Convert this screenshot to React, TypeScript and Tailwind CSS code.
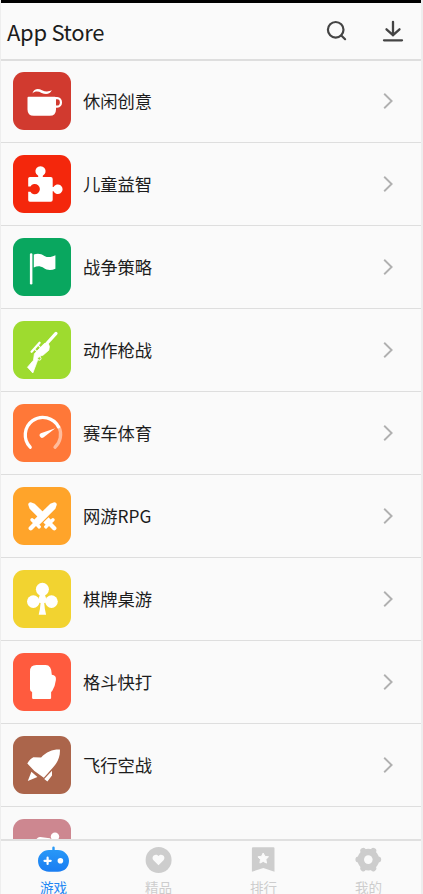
import React, { useState } from "react";

type Category = {
  name?: string;
  color: string;
  icon: React.ReactNode;
};

// upright sword centred on 0,0, rotated into place below
const sword =
  "M-3.600 8V-14.600L-1.800-18.400q1.800-1.800 3.600 0L3.600-14.600V8h1.600q1.500 0 1.500 1.700t-1.500 1.700H2.200v5.200q0 2.200-2.200 2.200t-2.200-2.200v-5.200h-3q-1.500 0-1.500-1.700t1.500-1.700z";

const categories: Category[] = [
  {
    name: "休闲创意",
    color: "bg-[#d13a2f]",
    icon: (
      <>
        <path d="M14.5 25.8q0-1 1-1h26.3q1.2 0 1.2 1v11.7q0 6.3-6.3 6.3H20.8q-6.3 0-6.3-6.3z" />
        <path d="M42 26.2h2.200c5 0 5 8.400 0 8.400H42" fill="none" stroke="#fff" strokeWidth="2.200" />
        <path d="M19.400 21.400c1.800-5.200 6-5 9.600-3.200 3.800 1.800 6.800 1.600 9.800-.2-1.400 4.200-6 5-10.200 2.900-3.200-1.600-6.400-2-9.200.5z" />
      </>
    ),
  },
  {
    name: "儿童益智",
    color: "bg-[#f4270c]",
    icon: (
      <path d="M16.800 22h8.400v-1.200a5.100 5.100 0 1 1 4.600 0V22h8q1.900 0 1.900 1.900v8.200h.8a4.800 4.800 0 1 1 0 4.200h-.8v8.500q0 1.900-1.900 1.900h-21q-1.600 0-1.600-1.600v-8.400h2.200a5.100 5.100 0 1 0 0-5.200h-2.200v-7.900q0-1.600 1.600-1.600z" />
    ),
  },
  {
    name: "战争策略",
    color: "bg-[#09a75f]",
    icon: (
      <>
        <rect x="16.9" y="15.2" width="2.500" height="31.200" rx="1.200" />
        <path d="M20.800 16.600c4-1.800 7.400-.8 10.600 1.300 3.600 1.900 7 1.400 11-.6v13.400c-4 1.800-8.400 1.800-12-1-3.400-2-6-2-9.600-.2z" />
      </>
    ),
  },
  {
    name: "动作枪战",
    color: "bg-[#9edb2f]",
    icon: (
      <>
        <path d="M32 24.500L43 12.400" stroke="#fff" strokeWidth="3.200" strokeLinecap="round" />
        <path
          d="M21.400 32.800l9.800-10.200 4 0 1.200 2.800-.6 3.800-5.800 5-2.200.6-3.200 4.500-1.300 3.500-3.500 9.200-5.300-5.800 6-7z"
          stroke="#fff"
          strokeWidth=".8"
          strokeLinejoin="round"
        />
        <path d="M18.600 30.700l8-8.900" stroke="#fff" strokeWidth="2.300" strokeLinecap="round" />
        <path d="M21.500 28.200l3 3M25 24.200l3 3" stroke="#fff" strokeWidth="1.200" />
        <circle cx="26.300" cy="37.500" r="1.700" fill="#9edb2f" stroke="#fff" strokeWidth="1" />
      </>
    ),
  },
  {
    name: "赛车体育",
    color: "bg-[#ff7838]",
    icon: (
      <>
        <path d="M17.200 43.200A17.600 17.600 0 1 1 45.500 22.900" fill="none" stroke="#fff" strokeWidth="3.300" strokeLinecap="round" />
        <path d="M46 22.900A17.600 17.600 0 0 1 42 43.200" fill="none" stroke="#fff" strokeOpacity=".5" strokeWidth="3.300" strokeLinecap="round" />
        <path d="M42.300 24.200L30.400 33.400a2.400 2.400 0 0 1-2.600-4.200z" />
      </>
    ),
  },
  {
    name: "网游RPG",
    color: "bg-[#ffa42a]",
    icon: (
      <>
        <path d={sword} transform="translate(29.500 29.500) rotate(-45)" />
        <g transform="translate(29.500 29.500) rotate(45)">
          <rect x="3.200" y="-4.800" width="1.700" height="9.600" fill="#ffa42a" />
          <path d={sword} />
        </g>
      </>
    ),
  },
  {
    name: "棋牌桌游",
    color: "bg-[#f2d330]",
    icon: (
      <>
        <circle cx="29.400" cy="19.300" r="6.500" />
        <circle cx="20.300" cy="31.600" r="6.300" />
        <circle cx="38.500" cy="31.600" r="6.300" />
        <path d="M26.800 25h5.200l1.400 4.200v3.400l-2.200.4q.5 6.800 1.900 11.800h-7.400q1.400-5 1.900-11.800l-2.200-.4v-3.400z" />
      </>
    ),
  },
  {
    name: "格斗快打",
    color: "bg-[#ff5b3e]",
    icon: (
      <path d="M17 18.500q0-6.400 6.400-6.400h9.200q6 0 6.200 9.600 4.700.5 4.100 5.200-.7 6-3.700 11.200l-1.100.8v6.200q0 .8-.8.800H19.900q-.8 0-.8-.8V39q-2.100-.7-2.100-3z" />
    ),
  },
  {
    name: "飞行空战",
    color: "bg-[#ab654b]",
    icon: (
      <>
        <path d="M46.900 13.500c.5 7-2.300 13.200-6.900 18l-9.200 10.300-9.400-6.800-7.100-7.400q2.800-5 6.100-6.400l7.700.2c5.400-5.700 11.800-8.200 18.800-7.900z" />
        <path d="M18.400 35.800l6 5.100-9.600 4.200zM39 34.800v4.700l-4.600 5.900-3.200-2.400z" />
      </>
    ),
  },
  {
    color: "bg-[#cd8790]",
    icon: (
      <>
        <circle cx="42" cy="17.600" r="4.200" />
        <path d="M22.800 21.300q1.600-3.500 4.400-3.300l9.600 1.200q2 .8 1.200 4H24z" />
      </>
    ),
  },
];

const tabs = [
  {
    label: "游戏",
    icon: (
      <>
        <defs>
          <linearGradient id="pad" x1="0" y1="0" x2="0" y2="1">
            <stop offset="0" stopColor="#2a9cf8" />
            <stop offset="1" stopColor="#1a7df2" />
          </linearGradient>
        </defs>
        <path d="M15.300 4V1.600a1.200 1.200 0 0 1 2.400 0V4H21c5.800 0 11 4.800 11 10.800 0 6.500-4.500 10.900-11 10.900h-9C5.500 25.700 1 21.300 1 14.800 1 8.800 6.200 4 12 4z" fill="url(#pad)" />
        <path d="M10.600 11.700v6.200M7.500 14.800h6.200" stroke="#fff" strokeWidth="2.200" strokeLinecap="round" />
        <circle cx="23.400" cy="14.800" r="2.800" fill="#fff" />
      </>
    ),
  },
  {
    label: "精品",
    icon: (
      <>
        <circle cx="16.600" cy="14" r="13" />
        <path d="M16.500 19.200l-5-5c-3-3.400 2-7.600 5-4.200 3-3.400 8 .8 5 4.200z" fill="#fafafa" />
      </>
    ),
  },
  {
    label: "排行",
    icon: (
      <>
        <path d="M6 1.300h20.400q1.100 0 1.100 1.100v23.400L16.300 22 4.900 25.800V2.400q0-1.100 1.100-1.100z" />
        <path d="M16.200 7l1.700 3.300 3.600.5-2.600 2.600.6 3.700-3.300-1.700-3.300 1.700.6-3.700-2.600-2.600 3.600-.5z" fill="#fafafa" stroke="#fafafa" strokeLinejoin="round" />
      </>
    ),
  },
  {
    label: "我的",
    icon: (
      <>
        <circle cx="16.300" cy="13.600" r="10.800" />
        <path
          d="M6.400 13.600h19.800M11.300 4.900l10 17.400M21.300 4.900l-10 17.400"
          stroke="currentColor"
          strokeWidth="6"
          strokeLinecap="round"
        />
        <circle cx="16.300" cy="13.600" r="4.300" fill="#fafafa" />
      </>
    ),
  },
];

const Header = () => {
  return (
    <header className="flex h-[58px] shrink-0 items-center justify-between border-b-2 border-[#dedede] pl-1.5 pr-4">
      <h1 className="text-[22px] leading-8 tracking-[-0.3px] text-[#1c1c1c]">App Store</h1>
      <div className="flex items-center gap-8">
        <button aria-label="search">
          <svg className="h-6 w-6" viewBox="0 0 24 24" fill="none" stroke="#444" strokeWidth="2.200" strokeLinecap="round">
            <circle cx="10.700" cy="10.800" r="7.800" />
            <path d="M16.300 16.500l3.800 3.700" />
          </svg>
        </button>
        <button aria-label="downloads">
          <svg className="h-6 w-6" viewBox="0 0 24 24" fill="none" stroke="#444" strokeWidth="2.300" strokeLinecap="round">
            <path d="M12 2.800v13.200M5.500 10.300l6.500 5.900 6.500-5.900M3 21.300h18" />
          </svg>
        </button>
      </div>
    </header>
  );
};

const CategoryRow = ({ name, color, icon }: Category) => {
  return (
    <li className="flex h-[83px] items-center border-b border-[#dedede] pl-3 pr-7">
      <div className={`h-[58px] w-[58px] shrink-0 rounded-[11px] ${color}`}>
        <svg className="h-full w-full" viewBox="0 0 58 58" fill="#fff">
          {icon}
        </svg>
      </div>
      <span className="ml-3 flex-1 text-[17.300px] leading-6 text-[#1c1c1c]">{name}</span>
      <svg className="h-4 w-2.5" viewBox="0 0 10 16" fill="none" stroke="#b0b0b0" strokeWidth="1.900">
        <path d="M1.200.8L8.600 8l-7.400 7.200" />
      </svg>
    </li>
  );
};

const App = () => {
  const [active, setActive] = useState(0);

  return (
    <div className="h-[894px] w-[423px] overflow-hidden bg-[#eeeeee] pl-px pr-0.5 font-['Noto_Sans_CJK_SC',sans-serif]">
      <div className="flex h-full flex-col bg-[#fafafa]">
        <div className="h-[3px] shrink-0 bg-black" />
        <Header />
        <ul className="min-h-0 flex-1 overflow-hidden -mt-px">
          {categories.map((item) => (
            <CategoryRow key={item.color} {...item} />
          ))}
        </ul>
        <nav className="grid h-[55px] shrink-0 grid-cols-4 border-t-2 border-[#e0e0e0]">
          {tabs.map((tab, i) => (
            <button
              key={tab.label}
              onClick={() => setActive(i)}
              className={`flex flex-col items-center pt-[5px] ${i === active ? "text-[#2387f3]" : "text-[#cdcdcd]"}`}
            >
              <svg className="h-7 w-[33px] shrink-0" viewBox="0 0 33 28" fill="currentColor">
                {tab.icon}
              </svg>
              <span className="mt-1 text-[13.500px] leading-[18px]">{tab.label}</span>
            </button>
          ))}
        </nav>
      </div>
    </div>
  );
};

export default App;
